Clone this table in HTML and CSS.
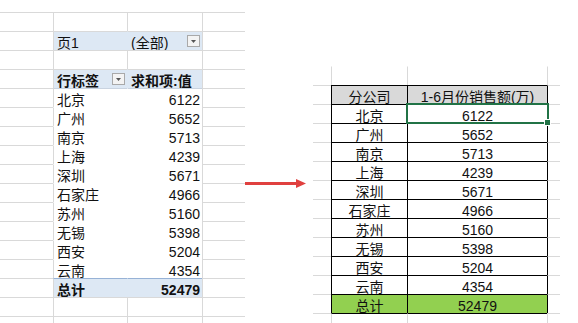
FILE: index.html
```html
<!DOCTYPE html>
<html lang="zh-CN">
<head>
<meta charset="utf-8">
<title>数据透视表</title>
<link rel="stylesheet" href="styles.css">
</head>
<body>
<div class="page">
  <div class="sheet left">
    <div class="c c1"></div><div class="c"></div><div class="c"></div><div class="c"></div>
    <div class="c c1"></div><div class="c pv">页1</div><div class="c pv nl drop"><span>(全部)</span><svg class="btn" width="13" height="12" viewBox="0 0 13 12"><rect x="0.5" y="0.5" width="12" height="11" fill="#f3f3f3" stroke="#a9a9a9"/><path d="M4 5h5l-2.5 3z" fill="#555"/></svg></div><div class="c"></div>
    <div class="c c1"></div><div class="c"></div><div class="c"></div><div class="c"></div>
    <div class="c c1"></div><div class="c pv b drop"><span>行标签</span><svg class="btn" width="13" height="12" viewBox="0 0 13 12"><rect x="0.5" y="0.5" width="12" height="11" fill="#f3f3f3" stroke="#a9a9a9"/><path d="M4 5h5l-2.5 3z" fill="#555"/></svg></div><div class="c pv nl b">求和项:值</div><div class="c"></div>
    <div class="c c1"></div><div class="c hb">北京</div><div class="c hb nl num">6122</div><div class="c"></div>
    <div class="c c1"></div><div class="c nt">广州</div><div class="c nt nl num">5652</div><div class="c"></div>
    <div class="c c1"></div><div class="c nt">南京</div><div class="c nt nl num">5713</div><div class="c"></div>
    <div class="c c1"></div><div class="c nt">上海</div><div class="c nt nl num">4239</div><div class="c"></div>
    <div class="c c1"></div><div class="c nt">深圳</div><div class="c nt nl num">5671</div><div class="c"></div>
    <div class="c c1"></div><div class="c nt">石家庄</div><div class="c nt nl num">4966</div><div class="c"></div>
    <div class="c c1"></div><div class="c nt">苏州</div><div class="c nt nl num">5160</div><div class="c"></div>
    <div class="c c1"></div><div class="c nt">无锡</div><div class="c nt nl num">5398</div><div class="c"></div>
    <div class="c c1"></div><div class="c nt">西安</div><div class="c nt nl num">5204</div><div class="c"></div>
    <div class="c c1"></div><div class="c nt">云南</div><div class="c nt nl num">4354</div><div class="c"></div>
    <div class="c c1"></div><div class="c pv tt b">总计</div><div class="c pv tt nl b num">52479</div><div class="c"></div>
    <div class="c c1"></div><div class="c"></div><div class="c"></div><div class="c"></div>
    <div class="c c1"></div><div class="c"></div><div class="c"></div><div class="c"></div>
  </div>

  <div class="gap">
    <svg class="arrow" width="61" height="10" viewBox="0 0 61 10"><rect x="0" y="3" width="52" height="3" fill="#e0403f"/><path d="M51 0L61 4.5L51 9z" fill="#e0403f"/></svg>
  </div>

  <div class="sheet right">
    <div class="c c1 c0"></div><div class="c c0"></div><div class="c c0"></div><div class="c c0"></div>
    <div class="c c1"></div><div class="c t th">分公司</div><div class="c t th">1-6月份销售额(万)</div><div class="c tr"></div>
    <div class="c c1"></div><div class="c t">北京</div><div class="c t sel">6122</div><div class="c tr"></div>
    <div class="c c1"></div><div class="c t">广州</div><div class="c t">5652</div><div class="c tr"></div>
    <div class="c c1"></div><div class="c t">南京</div><div class="c t">5713</div><div class="c tr"></div>
    <div class="c c1"></div><div class="c t">上海</div><div class="c t">4239</div><div class="c tr"></div>
    <div class="c c1"></div><div class="c t">深圳</div><div class="c t">5671</div><div class="c tr"></div>
    <div class="c c1"></div><div class="c t">石家庄</div><div class="c t">4966</div><div class="c tr"></div>
    <div class="c c1"></div><div class="c t">苏州</div><div class="c t">5160</div><div class="c tr"></div>
    <div class="c c1"></div><div class="c t">无锡</div><div class="c t">5398</div><div class="c tr"></div>
    <div class="c c1"></div><div class="c t">西安</div><div class="c t">5204</div><div class="c tr"></div>
    <div class="c c1"></div><div class="c t">云南</div><div class="c t">4354</div><div class="c tr"></div>
    <div class="c c1"></div><div class="c t tg">总计</div><div class="c t tg">52479</div><div class="c tr"></div>
    <div class="c c1"></div><div class="c tb"></div><div class="c tb"></div><div class="c"></div>
  </div>
</div>
</body>
</html>
```

FILE: styles.css
```css
html, body {
  margin: 0;
  padding: 0;
  background: #ffffff;
}

body {
  width: 578px;
  height: 323px;
  overflow: hidden;
  font-family: "Liberation Sans", "Noto Sans CJK SC", sans-serif;
  font-size: 14px;
  color: #111111;
}

.page {
  display: flex;
  align-items: flex-start;
}

.sheet {
  display: grid;
  grid-auto-rows: 19px;
}

.left {
  margin-top: 12px;
  grid-template-columns: 53px 74px 75px 43px;
}

.right {
  margin-top: 66px;
  grid-template-columns: 18px 76px 140px 13px;
}

.gap {
  width: 68px;
  padding-top: 179px;
  box-sizing: border-box;
}

.arrow {
  display: block;
}

.c {
  box-sizing: border-box;
  height: 19px;
  border-top: 1px solid #d9d9d9;
  border-left: 1px solid #d9d9d9;
  padding: 5px 2px 0 3px;
  line-height: 13px;
  white-space: nowrap;
}

.c1 {
  border-left: 0;
}

.c0 {
  border-top-color: transparent;
}

/* pivot table */
.pv {
  background: #dde8f4;
}

.nl {
  border-left-color: transparent;
}

.nt {
  border-top-color: transparent;
}

.hb {
  border-top-color: #c9d3e0;
}

.tt {
  border-top-color: #97b2d6;
}

.b {
  font-weight: bold;
}

.num {
  text-align: right;
}

.drop {
  display: flex;
  justify-content: space-between;
  align-items: flex-start;
}

.btn {
  display: block;
  margin-top: -2px;
  flex: none;
}

/* plain table */
.t {
  border-top-color: #000000;
  border-left-color: #000000;
  text-align: center;
  padding-left: 0;
  padding-right: 0;
}

.tr {
  border-left-color: #000000;
}

.tb {
  border-top-color: #000000;
}

.th {
  background: #d9d9d9;
}

.tg {
  background: #92d050;
}

.sel {
  position: relative;
}

.sel::after {
  content: "";
  position: absolute;
  left: -2px;
  top: -2px;
  right: -2px;
  bottom: -1px;
  border: 2px solid #217346;
}

.sel::before {
  content: "";
  position: absolute;
  right: -4px;
  bottom: -3px;
  width: 5px;
  height: 5px;
  background: #217346;
  border: 1px solid #ffffff;
  z-index: 1;
}
```
